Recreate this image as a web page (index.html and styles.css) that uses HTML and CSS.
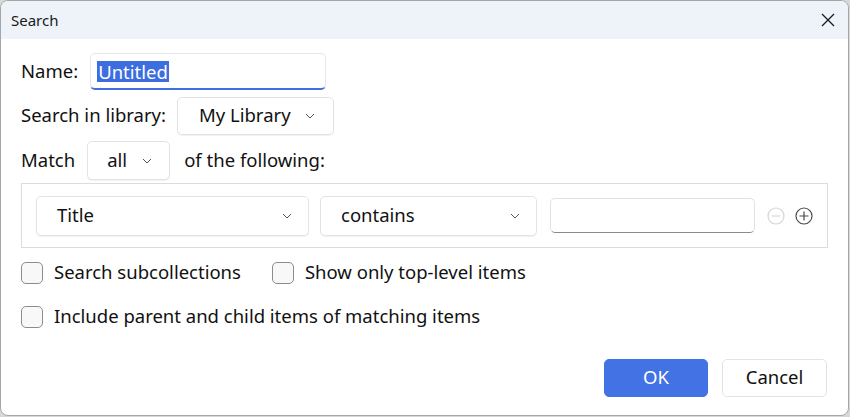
FILE: index.html
```html
<!DOCTYPE html>
<html>
<head>
<meta charset="utf-8">
<link rel="stylesheet" href="styles.css">
</head>
<body>
<div class="window">
  <div class="titlebar">
    <span class="title">Search</span>
    <svg class="close" width="14" height="14" viewBox="0 0 14 14"><path d="M1 1 L13 13 M13 1 L1 13" stroke="#1a1a1a" stroke-width="1.3" fill="none"/></svg>
  </div>
  <div class="content">
    <div class="row row-name">
      <span class="label">Name:</span>
      <div class="name-input"><span class="sel">Untitled</span></div>
    </div>
    <div class="row row-lib">
      <span class="label">Search in library:</span>
      <div class="dropdown lib"><span>My Library</span><svg class="chev" width="10" height="6" viewBox="0 0 10 6"><path d="M1 1 L5 5 L9 1" stroke="#555" stroke-width="1" fill="none"/></svg></div>
    </div>
    <div class="row row-match">
      <span class="label">Match</span>
      <div class="dropdown match"><span>all</span><svg class="chev" width="10" height="6" viewBox="0 0 10 6"><path d="M1 1 L5 5 L9 1" stroke="#555" stroke-width="1" fill="none"/></svg></div>
      <span class="label">of the following:</span>
    </div>
    <div class="conditions">
      <div class="dropdown field"><span>Title</span><svg class="chev" width="10" height="6" viewBox="0 0 10 6"><path d="M1 1 L5 5 L9 1" stroke="#555" stroke-width="1" fill="none"/></svg></div>
      <div class="dropdown op"><span>contains</span><svg class="chev" width="10" height="6" viewBox="0 0 10 6"><path d="M1 1 L5 5 L9 1" stroke="#555" stroke-width="1" fill="none"/></svg></div>
      <div class="value-input"></div>
      <svg class="circ" width="18" height="18" viewBox="0 0 18 18"><circle cx="9" cy="9" r="8" stroke="#d4d4d4" stroke-width="1.2" fill="none"/><path d="M4.5 9 H13.5" stroke="#d4d4d4" stroke-width="1.2"/></svg>
      <svg class="circ plus" width="18" height="18" viewBox="0 0 18 18"><circle cx="9" cy="9" r="8" stroke="#4a4a4a" stroke-width="1.2" fill="none"/><path d="M4.5 9 H13.5 M9 4.5 V13.5" stroke="#4a4a4a" stroke-width="1.2"/></svg>
    </div>
    <div class="checks">
      <label class="check"><span class="box"></span><span>Search subcollections</span></label>
      <label class="check second"><span class="box"></span><span>Show only top-level items</span></label>
    </div>
    <div class="checks row2">
      <label class="check"><span class="box"></span><span>Include parent and child items of matching items</span></label>
    </div>
    <div class="buttons">
      <button class="btn ok">OK</button>
      <button class="btn cancel">Cancel</button>
    </div>
  </div>
</div>
</body>
</html>
```

FILE: styles.css
```css
* { box-sizing: border-box; }
html, body { margin: 0; padding: 0; }
body {
  background: #d8d8d8;
  font-family: "Noto Sans", "Open Sans", sans-serif;
  color: #111;
  width: 850px;
  height: 417px;
  overflow: hidden;
}
.window {
  width: 849px;
  height: 416px;
  background: #fff;
  border: 1px solid #a6a6a6;
  border-radius: 8px;
  overflow: hidden;
}
.titlebar {
  height: 38px;
  background: #eef2f9;
  display: flex;
  align-items: center;
  justify-content: space-between;
  padding: 0 13px 0 10px;
}
.title { font-size: 15px; color: #1a1a1a; padding-bottom: 1px; }
.close { display: block; }
.content {
  padding: 14px 20px 0 20px;
  font-size: 18.5px;
  line-height: 24px;
}
.row {
  display: flex;
  align-items: center;
}
.label { white-space: nowrap; padding-bottom: 2px; }
.row-name { height: 37px; }
.row-name .label { margin-right: 12px; }
.name-input {
  width: 236px;
  height: 37px;
  border: 1px solid #e6e6e6;
  border-bottom: 2px solid #3f6fe0;
  border-radius: 5px;
  padding: 7px 6px 0 6px;
  line-height: 21px;
}
.sel {
  background: #3d6ee0;
  color: #fff;
  display: inline-block;
  height: 21px;
  line-height: 21px;
  padding: 0 1px;
}
.row-lib { margin-top: 7px; height: 38px; }
.row-lib .label { margin-right: 11px; }
.dropdown {
  background: #fff;
  border: 1px solid #e3e3e3;
  border-radius: 5px;
  box-shadow: 0 1px 1px rgba(0,0,0,0.06);
  display: flex;
  align-items: center;
  justify-content: space-between;
}
.dropdown span { padding-bottom: 2px; }
.chev { display: block; }
.dropdown.lib { width: 157px; height: 38px; padding: 0 18px 0 21px; }
.row-match { margin-top: 6px; height: 39px; }
.row-match .label:first-child { margin-right: 12px; }
.dropdown.match { width: 83px; height: 39px; padding: 0 17px 0 19px; margin-right: 14px; }
.conditions {
  margin-top: 3px;
  height: 65px;
  border: 1px solid #dcdcdc;
  display: flex;
  align-items: center;
  padding: 0 13px 0 14px;
}
.dropdown.field { width: 273px; height: 40px; padding: 0 16px 0 20px; margin-right: 11px; }
.dropdown.op { width: 217px; height: 40px; padding: 0 16px 0 20px; margin-right: 13px; }
.value-input {
  width: 205px;
  height: 35px;
  border: 1px solid #e3e3e3;
  border-bottom: 1px solid #8a8a8a;
  border-radius: 5px;
  margin-right: 12px;
}
.circ { display: block; }
.circ.plus { margin-left: 10px; }
.checks {
  display: flex;
  align-items: center;
  margin-top: 14px;
  height: 22px;
}
.checks.row2 { margin-top: 22px; }
.check { display: flex; align-items: center; white-space: nowrap; }
.check span:last-child { padding-bottom: 2px; }
.check.second { margin-left: 31px; }
.box {
  width: 22px;
  height: 22px;
  border: 1px solid #8c8c8c;
  border-radius: 5px;
  background: #f8f8f8;
  margin-right: 11px;
  display: inline-block;
}
.buttons {
  display: flex;
  justify-content: flex-end;
  gap: 14px;
  margin-top: 31px;
  padding-right: 1px;
}
.btn {
  font-family: "Noto Sans", "Open Sans", sans-serif;
  font-size: 18.5px;
  height: 38px;
  border-radius: 5px;
  cursor: default;
  padding: 0 0 4px 0;
}
.btn.ok {
  width: 104px;
  background: #4272e3;
  color: #fff;
  border: 1px solid #4272e3;
}
.btn.cancel {
  width: 105px;
  background: #fff;
  color: #111;
  border: 1px solid #e3e3e3;
}
```
